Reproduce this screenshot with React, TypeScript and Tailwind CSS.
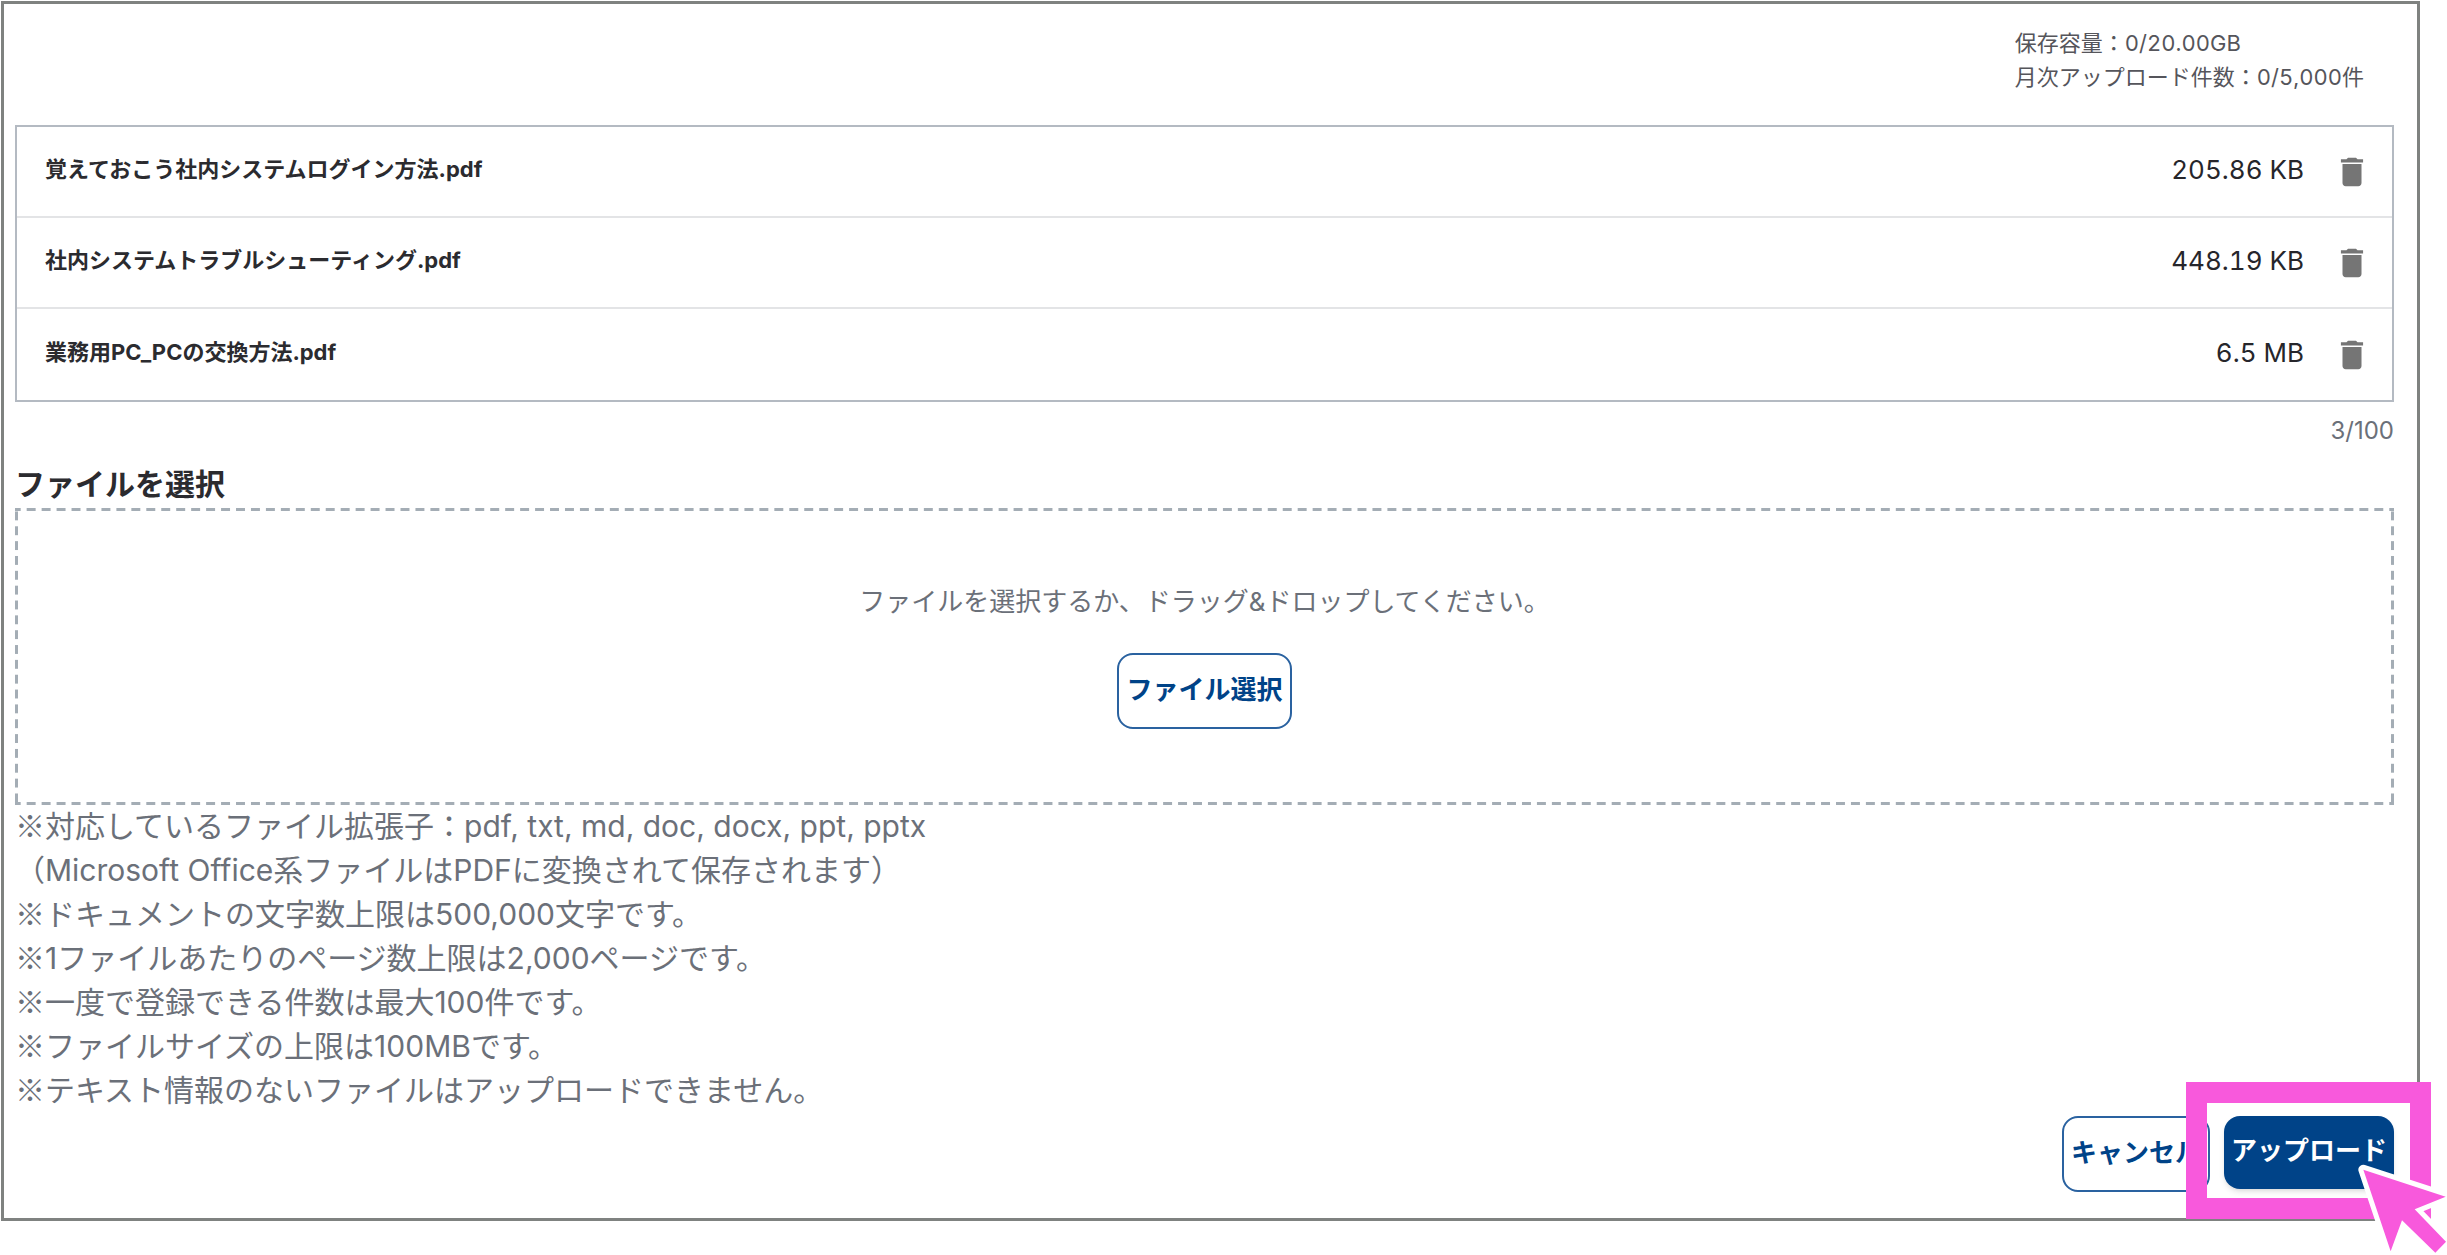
import { MdDelete } from "react-icons/md";

type UploadFile = { name: string; size: string };

const files: UploadFile[] = [
  { name: "覚えておこう社内システムログイン方法.pdf", size: "205.86 KB" },
  { name: "社内システムトラブルシューティング.pdf", size: "448.19 KB" },
  { name: "業務用PC_PCの交換方法.pdf", size: "6.5 MB" },
];

const notes = [
  { mark: "※", text: "対応しているファイル拡張子：pdf, txt, md, doc, docx, ppt, pptx" },
  { mark: "", text: "（Microsoft Office系ファイルはPDFに変換されて保存されます）" },
  { mark: "※", text: "ドキュメントの文字数上限は500,000文字です。" },
  { mark: "※", text: "1ファイルあたりのページ数上限は2,000ページです。" },
  { mark: "※", text: "一度で登録できる件数は最大100件です。" },
  { mark: "※", text: "ファイルサイズの上限は100MBです。" },
  { mark: "※", text: "テキスト情報のないファイルはアップロードできません。" },
];

function FileRow({ file }: { file: UploadFile }) {
  return (
    <li className="flex h-[91px] items-center pl-[28px] pr-[21px]">
      <span className="flex-1 pb-1 text-[22px] font-bold text-[#2b2b2f]">{file.name}</span>
      <span className="pb-1 text-[26px] tabular-nums text-[#26262b]">{file.size}</span>
      <button type="button" aria-label={`${file.name}を削除`} className="ml-[29px] text-[#757575]">
        <MdDelete className="size-[38px]" />
      </button>
    </li>
  );
}

// Pink frame and arrow pointing at the upload button
function Highlight() {
  return (
    <div className="pointer-events-none absolute -left-[38px] -top-[34px] h-[137px] w-[245px] border-[21px] border-[#f859dc]">
      <svg viewBox="0 0 300 285" className="absolute left-[146px] top-[55px] h-[95px] w-[100px] overflow-visible">
        <path
          d="M31 35 278 116 185 154 279 251 247 284 147 187 113 280Z"
          fill="#f859dc"
          stroke="#fff"
          strokeWidth="30"
          strokeLinejoin="round"
          paintOrder="stroke"
        />
      </svg>
    </div>
  );
}

export default function App() {
  return (
    <div className="min-h-screen overflow-hidden bg-white pb-8 pl-px pr-[27px] pt-px font-['Inter','Noto_Sans_CJK_JP',sans-serif]">
      <main className="border-[3px] border-[#7f8280] pb-[26px] pl-[11px] pr-[23px] pt-[22px]">
        <div className="flex justify-end pr-[30px] text-[22px] leading-[34px] tabular-nums text-[#55555b]">
          <div>
            <p>保存容量：0/20.00GB</p>
            <p>月次アップロード件数：0/5,000件</p>
          </div>
        </div>

        <ul className="mt-[31px] divide-y-2 divide-[#e3e4e6] border-2 border-[#b4bac2]">
          {files.map((file) => (
            <FileRow key={file.name} file={file} />
          ))}
        </ul>
        <p className="mt-3 text-right text-[24px] leading-[34px] text-[#6b7079]">3/100</p>

        <h2 className="mb-[2px] mt-[14px] text-[30px] font-bold leading-[44px] text-[#2b2b2f]">ファイルを選択</h2>
        <section className="flex h-[297px] flex-col items-center bg-[linear-gradient(to_right,#a4adb5_30%,transparent_30%_70%,#a4adb5_70%),linear-gradient(to_right,#a4adb5_30%,transparent_30%_70%,#a4adb5_70%),linear-gradient(to_bottom,#a4adb5_30%,transparent_30%_70%,#a4adb5_70%),linear-gradient(to_bottom,#a4adb5_30%,transparent_30%_70%,#a4adb5_70%)] bg-[position:top,bottom,left,right] bg-[size:15px_3px,15px_3px,3px_15px,3px_15px] [background-repeat:round_no-repeat,round_no-repeat,no-repeat_round,no-repeat_round] pt-[74px]">
          <p className="text-[26px] leading-[40px] text-[#6b7079]">
            ファイルを選択するか、ドラッグ&amp;ドロップしてください。
          </p>
          <button
            type="button"
            className="mt-[31px] h-[76px] rounded-2xl border-2 border-[#2a62a0] px-[7px] pb-1 text-[26px] font-bold text-[#004388]"
          >
            ファイル選択
          </button>
        </section>

        <div className="-mt-px text-[30px] leading-[44px] text-[#6b7079]">
          {notes.map((note) => (
            <p key={note.text}>
              <span className="font-['Noto_Sans_CJK_JP',sans-serif] leading-none">{note.mark}</span>
              {note.text}
            </p>
          ))}
        </div>

        <div className="mt-1 flex items-start justify-end gap-[14px]">
          <button
            type="button"
            className="h-[76px] rounded-2xl border-2 border-[#2a62a0] px-[7px] pb-1 text-[26px] font-bold text-[#004388]"
          >
            キャンセル
          </button>
          <div className="relative">
            <button
              type="button"
              className="h-[73px] rounded-2xl bg-[#004388] px-[7px] pb-1 text-[26px] font-bold text-white shadow-md"
            >
              アップロード
            </button>
            <Highlight />
          </div>
        </div>
      </main>
    </div>
  );
}
